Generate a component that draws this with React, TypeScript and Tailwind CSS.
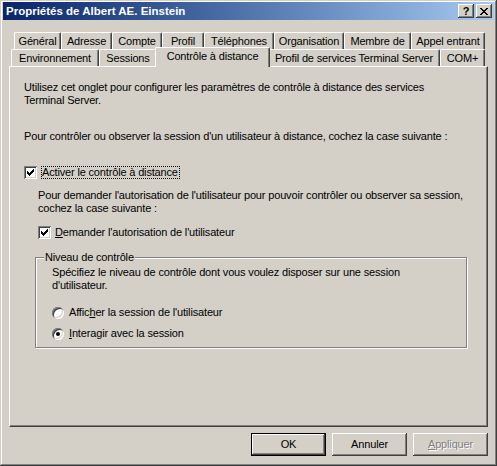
import React from "react";

const raised =
  "shadow-[inset_-1px_-1px_#404040,inset_1px_1px_#ffffff,inset_-2px_-2px_#808080,inset_2px_2px_#d4d0c8]";

interface TabDef {
  label: string;
  width: string;
  active?: boolean;
}

const backRow: TabDef[] = [
  { label: "Général", width: "w-[47px]" },
  { label: "Adresse", width: "w-[51px]" },
  { label: "Compte", width: "w-[50px]" },
  { label: "Profil", width: "w-[42px]" },
  { label: "Téléphones", width: "w-[70px]" },
  { label: "Organisation", width: "w-[70px]" },
  { label: "Membre de", width: "w-[67px]" },
  { label: "Appel entrant", width: "w-[74px]" },
];

const frontRow: TabDef[] = [
  { label: "Environnement", width: "w-[88px]" },
  { label: "Sessions", width: "w-[58px]" },
  { label: "Contrôle à distance", width: "w-[115px]", active: true },
  { label: "Profil de services Terminal Server", width: "w-[172px]" },
  { label: "COM+", width: "w-[45px]" },
];

function Tab({ label, width, active }: TabDef) {
  return (
    <div
      className={`${width} flex shrink-0 items-center justify-center whitespace-nowrap rounded-t-[2px] border-t border-r border-l border-t-white border-r-[#404040] border-l-white bg-[#d4d0c8] shadow-[inset_-1px_0_#808080] ${
        active ? "relative z-10 -mx-[2px] -mt-[2px] h-[20px] pb-[3px]" : "h-full"
      }`}
    >
      {label}
    </div>
  );
}

function CheckMark() {
  return (
    <svg width="7" height="7" viewBox="0 0 7 7" shapeRendering="crispEdges">
      <path
        fill="#000"
        d="M6 0h1v1h-1z M5 1h2v1h-2z M0 2h1v1h-1z M4 2h3v1h-3z M0 3h2v1h-2z M3 3h3v1h-3z M0 4h5v1h-5z M1 5h3v1h-3z M2 6h1v1h-1z"
      />
    </svg>
  );
}

function Checkbox({ checked }: { checked: boolean }) {
  return (
    <div className="flex h-[13px] w-[13px] shrink-0 items-center justify-center bg-white shadow-[inset_1px_1px_#808080,inset_-1px_-1px_#ffffff,inset_2px_2px_#404040,inset_-2px_-2px_#d4d0c8]">
      {checked && <CheckMark />}
    </div>
  );
}

function Radio({ checked }: { checked: boolean }) {
  return (
    <div className="flex h-[12px] w-[12px] shrink-0 items-center justify-center rounded-full bg-white shadow-[inset_1px_1px_#808080,inset_-1px_-1px_#ffffff,inset_2px_2px_#404040,inset_-2px_-2px_#d4d0c8]">
      {checked && <div className="h-[4px] w-[4px] rounded-full bg-black" />}
    </div>
  );
}

function CloseGlyph() {
  return (
    <svg width="8" height="7" viewBox="0 0 8 7" shapeRendering="crispEdges">
      <path
        fill="#000"
        d="M0 0h2v1h-2z M6 0h2v1h-2z M1 1h2v1h-2z M5 1h2v1h-2z M2 2h4v1h-4z M3 3h2v1h-2z M2 4h4v1h-4z M1 5h2v1h-2z M5 5h2v1h-2z M0 6h2v1h-2z M6 6h2v1h-2z"
      />
    </svg>
  );
}

export default function App() {
  return (
    <div className="flex h-[466px] w-[497px] flex-col bg-[#d4d0c8] px-[3px] pt-[2px] font-['Liberation_Sans',Arial,sans-serif] text-[11px] leading-[13px] tracking-[-0.16px] text-black shadow-[inset_-1px_-1px_#404040,inset_1px_1px_#d4d0c8,inset_-2px_-2px_#808080,inset_2px_2px_#ffffff]">
      {/* title bar */}
      <div className="flex h-[18px] items-center justify-between bg-gradient-to-r from-[#0a246a] to-[#a6caf0] pr-[2px] pl-[3px]">
        <span className="text-[11.5px] font-bold tracking-normal text-white">Propriétés de Albert AE. Einstein</span>
        <div className="flex gap-[2px]">
          <div className={`flex h-[14px] w-[16px] items-center justify-center bg-[#d4d0c8] text-[11px] leading-none font-bold ${raised}`}>
            ?
          </div>
          <div className={`flex h-[14px] w-[16px] items-center justify-center bg-[#d4d0c8] ${raised}`}>
            <CloseGlyph />
          </div>
        </div>
      </div>

      {/* tabs */}
      <div className="mt-[12px] ml-[11px] flex h-[17px]">
        {backRow.map((t) => (
          <Tab key={t.label} {...t} />
        ))}
      </div>
      <div className="ml-[8px] flex h-[17px]">
        {frontRow.map((t) => (
          <Tab key={t.label} {...t} />
        ))}
      </div>

      {/* panel */}
      <div className="ml-[6px] h-[361px] w-[479px] border-t border-r border-b border-l border-t-white border-r-[#404040] border-b-[#404040] border-l-white pt-[14px] pl-[14px] shadow-[inset_-1px_-1px_#808080]">
        <p className="whitespace-nowrap">
          Utilisez cet onglet pour configurer les paramètres de contrôle à distance des services
          <br />
          Terminal Server.
        </p>
        <p className="mt-[23px] whitespace-nowrap">
          Pour contrôler ou observer la session d'un utilisateur à distance, cochez la case suivante :
        </p>

        <div className="mt-[23px] flex h-[13px] items-center">
          <Checkbox checked />
          <span className="ml-[4px] h-[13px] border border-dotted border-black pr-[1px] leading-[11px]">
            Activer le contrôle à distance
          </span>
        </div>

        <div className="ml-[14px]">
          <p className="mt-[10px] whitespace-nowrap">
            Pour demander l'autorisation de l'utilisateur pour pouvoir contrôler ou observer sa session,
            <br />
            cochez la case suivante :
          </p>
          <div className="mt-[11px] flex h-[13px] items-center">
            <Checkbox checked />
            <span className="ml-[4px]">
              <u>D</u>emander l'autorisation de l'utilisateur
            </span>
          </div>

          <div className="relative mt-[18px] -ml-[3px] h-[91px] w-[432px] border border-[#808080] pt-[8px] pl-[16px] shadow-[inset_1px_1px_#ffffff,1px_1px_#ffffff]">
            <span className="absolute -top-[7px] left-[8px] bg-[#d4d0c8] px-[1px]">Niveau de contrôle</span>
            <p className="whitespace-nowrap">
              Spécifiez le niveau de contrôle dont vous voulez disposer sur une session
              <br />
              d'utilisateur.
            </p>
            <div className="mt-[14px] flex h-[13px] items-center">
              <Radio checked={false} />
              <span className="ml-[5px]">
                Affic<u>h</u>er la session de l'utilisateur
              </span>
            </div>
            <div className="mt-[8px] flex h-[13px] items-center">
              <Radio checked />
              <span className="ml-[5px]">
                <u>I</u>nteragir avec la session
              </span>
            </div>
          </div>
        </div>
      </div>

      {/* buttons */}
      <div className="mt-[6px] mr-[6px] flex justify-end gap-[6px]">
        <div className="flex h-[23px] w-[75px] items-center justify-center border border-black bg-[#d4d0c8] shadow-[inset_-1px_-1px_#404040,inset_1px_1px_#ffffff,inset_-2px_-2px_#808080]">
          OK
        </div>
        <div className={`flex h-[23px] w-[75px] items-center justify-center bg-[#d4d0c8] ${raised}`}>Annuler</div>
        <div
          className={`flex h-[23px] w-[75px] items-center justify-center bg-[#d4d0c8] text-[#808080] [text-shadow:1px_1px_#ffffff] ${raised}`}
        >
          <span>
            <u>A</u>ppliquer
          </span>
        </div>
      </div>
    </div>
  );
}
